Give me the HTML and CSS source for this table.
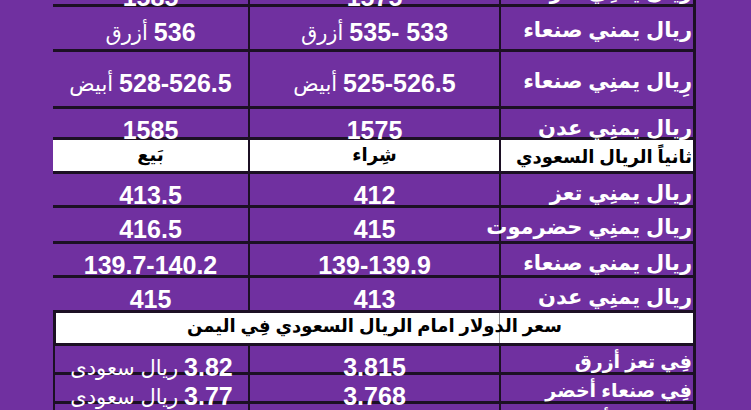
FILE: index.html
```html
<!DOCTYPE html>
<html lang="ar">
<head>
<meta charset="utf-8">
<title>أسعار الصرف</title>
<link rel="stylesheet" href="styles.css">
</head>
<body>
<div class="sheet" dir="rtl">
  <div class="row h37">
    <div class="cell label">ريال يمنِي تعز</div>
    <div class="cell num low">1575</div>
    <div class="cell num low">1585</div>
  </div>
  <div class="row h45">
    <div class="cell label">ريال يمني صنعاء</div>
    <div class="cell num">533 -535 <span class="ar">أزرق</span></div>
    <div class="cell num">536 <span class="ar">أزرق</span></div>
  </div>
  <div class="row h57">
    <div class="cell label">رِيال يمنِي صنعاء</div>
    <div class="cell num">525-526.5 <span class="ar">أبيض</span></div>
    <div class="cell num">528-526.5 <span class="ar">أبيض</span></div>
  </div>
  <div class="row h31">
    <div class="cell label">ريال يمنِي عدن</div>
    <div class="cell num">1575</div>
    <div class="cell num">1585</div>
  </div>
  <div class="row head h34">
    <div class="cell label">ثانياً الريال السعودي</div>
    <div class="cell title">شِراء</div>
    <div class="cell title">بَيع</div>
  </div>
  <div class="row h34">
    <div class="cell label">ريال يمنِي تعز</div>
    <div class="cell num">412</div>
    <div class="cell num">413.5</div>
  </div>
  <div class="row h36">
    <div class="cell label">ريال يمنِي حضرموت</div>
    <div class="cell num">415</div>
    <div class="cell num">416.5</div>
  </div>
  <div class="row h34">
    <div class="cell label">ريال يمني صنعاء</div>
    <div class="cell num">139-139.9</div>
    <div class="cell num">139.7-140.2</div>
  </div>
  <div class="row h35">
    <div class="cell label">ريال يمنِي عدن</div>
    <div class="cell num">413</div>
    <div class="cell num">415</div>
  </div>
  <div class="row banner">
    <div class="cell title">سعر الدولار امام الريال السعودي فِي اليمن</div>
  </div>
  <div class="row boxed h29">
    <div class="cell label">فِي تعز أزرق</div>
    <div class="cell num">3.815</div>
    <div class="cell num">3.82 <span class="ar">ريال سعودى</span></div>
  </div>
  <div class="row boxed h29">
    <div class="cell label">فِي صنعاء أخضر</div>
    <div class="cell num">3.768</div>
    <div class="cell num">3.77 <span class="ar">ريال سعودى</span></div>
  </div>
  <div class="row boxed h29">
    <div class="cell label">فِي عدن أبيض</div>
    <div class="cell num">3.765</div>
    <div class="cell num">3.77 <span class="ar">ريال سعودى</span></div>
  </div>
</div>
</body>
</html>
```

FILE: styles.css
```css
html, body {
  margin: 0;
  padding: 0;
}

body {
  background: #7030a0;
  height: 410px;
  overflow: hidden;
  font-family: "Liberation Sans", "DejaVu Sans", sans-serif;
  color: #ffffff;
}

.sheet {
  width: 643px;
  margin: -30px 0 0 53px;
}

.row {
  display: grid;
  grid-template-columns: 194px 251px 1fr;
  box-sizing: border-box;
  border-right: 3px solid #1c1024;
  border-bottom: 3px solid #1c1024;
}

.h29 { height: 29px; }
.h31 { height: 31px; }
.h34 { height: 34px; }
.h35 { height: 35px; }
.h36 { height: 36px; }
.h37 { height: 37px; }
.h45 { height: 45px; }
.h57 { height: 57px; }

.cell {
  display: flex;
  align-items: center;
  justify-content: center;
  padding-top: 9px;
  box-sizing: border-box;
  white-space: nowrap;
  line-height: 1;
  overflow: visible;
}

.cell:nth-child(1),
.cell:nth-child(2) {
  border-left: 2px solid #1c1024;
}

.num {
  font-size: 25px;
  font-weight: bold;
}

.num.low {
  padding-top: 15px;
}

.num .ar {
  font-size: 21px;
  font-weight: normal;
  margin-right: 6px;
}

.label {
  justify-content: flex-start;
  padding-top: 3px;
  padding-right: 1px;
  font-size: 21px;
  font-weight: bold;
}

.head {
  background: #ffffff;
  color: #000000;
}

.head .label {
  font-size: 18px;
  padding-top: 2px;
}

.title {
  font-size: 18px;
  font-weight: bold;
  padding-top: 0;
  padding-bottom: 2px;
}

.banner {
  grid-template-columns: 1fr;
  border-left: 3px solid #1c1024;
  border-top: 3px solid #1c1024;
  margin-top: -3px;
  height: 36px;
  background: #ffffff linear-gradient(#9a9a9a, #9a9a9a) no-repeat;
  background-size: 1px 100%;
  background-position: 443px 0;
  color: #000000;
}

.banner .cell {
  border-left: none;
  font-size: 18px;
  padding-bottom: 4px;
}

.boxed {
  border-left: 2px solid #1c1024;
}

.boxed .label {
  font-size: 19px;
  padding-top: 0;
  padding-bottom: 3px;
}
```
